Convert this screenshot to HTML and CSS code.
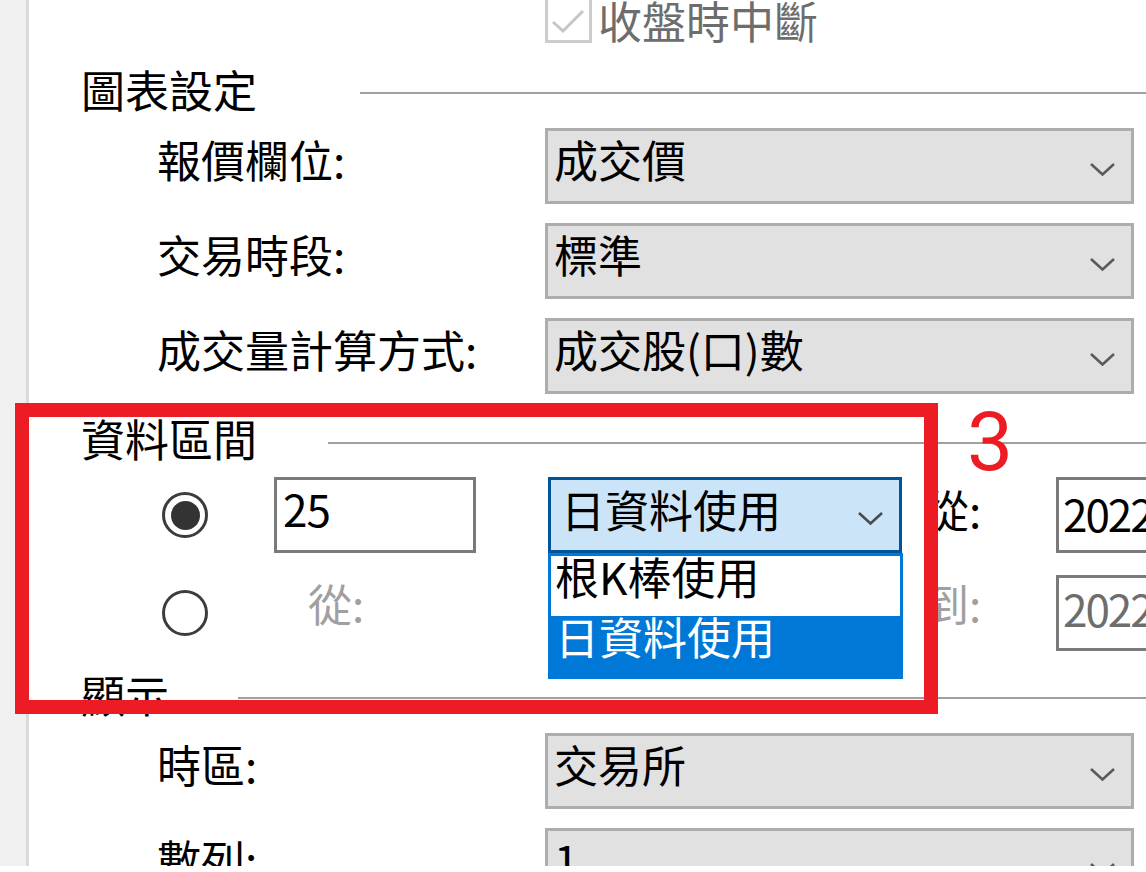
FILE: index.html
```html
<!DOCTYPE html>
<html lang="zh-Hant">
<head>
<meta charset="utf-8">
<title>圖表設定</title>
<link rel="stylesheet" href="styles.css">
</head>
<body>
<div class="app">
  <aside class="rail"></aside>
  <main class="panel">
    <div class="top-row">
      <span class="checkbox"><svg viewBox="0 0 41 41" width="41" height="41"><polyline points="5,23 15,32 35,12" fill="none" stroke="#c6c6c6" stroke-width="3"/></svg></span>
      <span class="top-label">收盤時中斷</span>
    </div>

    <div class="section-head head-chart">
      <span class="section-title">圖表設定</span><span class="section-rule"></span>
    </div>
    <div class="field-row first">
      <span class="field-label">報價欄位:</span>
      <div class="combo"><span class="combo-text">成交價</span><svg class="chev" viewBox="0 0 27 15"><polyline points="2,2 13.5,12.5 25,2" fill="none" stroke="#5a5a5a" stroke-width="2.6"/></svg></div>
    </div>
    <div class="field-row">
      <span class="field-label">交易時段:</span>
      <div class="combo"><span class="combo-text">標準</span><svg class="chev" viewBox="0 0 27 15"><polyline points="2,2 13.5,12.5 25,2" fill="none" stroke="#5a5a5a" stroke-width="2.6"/></svg></div>
    </div>
    <div class="field-row">
      <span class="field-label">成交量計算方式:</span>
      <div class="combo"><span class="combo-text">成交股(口)數</span><svg class="chev" viewBox="0 0 27 15"><polyline points="2,2 13.5,12.5 25,2" fill="none" stroke="#5a5a5a" stroke-width="2.6"/></svg></div>
    </div>

    <div class="section-head head-range">
      <span class="section-title">資料區間</span><span class="section-rule"></span>
    </div>
    <div class="range-grid">
      <span class="radio on"></span>
      <span class="textbox">25</span>
      <div class="combo-open">
        <span class="combo-text">日資料使用</span><svg class="chev" viewBox="0 0 27 15"><polyline points="2,2 13.5,12.5 25,2" fill="none" stroke="#4a4a4a" stroke-width="2.6"/></svg>
        <div class="dropdown">
          <div class="dropdown-item">根K棒使用</div>
          <div class="dropdown-item selected">日資料使用</div>
        </div>
      </div>
      <span class="range-label">從:</span>
      <span class="datebox">2022</span>

      <span class="radio"></span>
      <span class="range-label disabled from-off">從:</span>
      <span class="empty-cell"></span>
      <span class="range-label disabled">到:</span>
      <span class="datebox disabled">2022</span>
    </div>

    <div class="section-head head-display">
      <span class="section-title">顯示</span><span class="section-rule"></span>
    </div>
    <div class="field-row first">
      <span class="field-label">時區:</span>
      <div class="combo"><span class="combo-text">交易所</span><svg class="chev" viewBox="0 0 27 15"><polyline points="2,2 13.5,12.5 25,2" fill="none" stroke="#5a5a5a" stroke-width="2.6"/></svg></div>
    </div>
    <div class="field-row">
      <span class="field-label">數列:</span>
      <div class="combo"><span class="combo-text">1</span><svg class="chev" viewBox="0 0 27 15"><polyline points="2,2 13.5,12.5 25,2" fill="none" stroke="#5a5a5a" stroke-width="2.6"/></svg></div>
    </div>
  </main>

  <div class="annot-box"></div>
  <div class="annot-num">3</div>
</div>
</body>
</html>
```

FILE: styles.css
```css
html, body {
  margin: 0;
  padding: 0;
}

body {
  width: 1146px;
  height: 872px;
  overflow: hidden;
  background: #ffffff;
  font-family: "Noto Sans CJK TC", "Noto Sans CJK SC", sans-serif;
  font-size: 44px;
  color: #000000;
}

.app {
  position: relative;
  display: flex;
  height: 866px;
  overflow: hidden;
}

.rail {
  flex: none;
  width: 26px;
  background: #f0f0f0;
  border-right: 3px solid #dadada;
}

.panel {
  flex: 1;
  min-width: 0;
}

/* top disabled checkbox */
.top-row {
  height: 44px;
  display: flex;
  align-items: flex-end;
  padding-left: 516px;
}

.checkbox {
  flex: none;
  box-sizing: border-box;
  width: 47px;
  height: 47px;
  margin-bottom: 1px;
  border: 3px solid #cccccc;
  background: #ffffff;
  display: flex;
}

.top-label {
  line-height: 44px;
  margin: 0 0 2px 6px;
  color: #6d6d6d;
  white-space: nowrap;
}

/* section headers */
.section-head {
  display: flex;
  align-items: flex-start;
  height: 44px;
  line-height: 44px;
  padding-left: 52px;
}

.section-title {
  white-space: nowrap;
}

.section-rule {
  flex: 1;
  height: 2px;
  margin-top: 25px;
  background: #a0a0a0;
}

.head-chart { margin-top: 23px; }
.head-chart .section-rule { margin-left: 103px; }

.head-range { margin-top: 22px; }
.head-range .section-rule { margin-left: 71px; margin-top: 26px; }

.head-display { margin-top: 21px; }
.head-display .section-rule { margin-left: 69px; }

/* label + combo rows */
.field-row {
  display: grid;
  grid-template-columns: 388px 589px;
  height: 76px;
  margin-top: 19px;
  padding-left: 128px;
}

.field-row.first {
  margin-top: 17px;
}

.field-label {
  line-height: 44px;
  padding-top: 9px;
  white-space: nowrap;
}

.combo {
  box-sizing: border-box;
  height: 76px;
  display: flex;
  align-items: flex-start;
  padding: 6px 15px 0 6px;
  border: 3px solid #adadad;
  background: #e1e1e1;
}

.combo-text {
  flex: 1;
  line-height: 44px;
  white-space: nowrap;
}

.chev {
  flex: none;
  width: 27px;
  height: 15px;
  align-self: center;
}

/* data range block */
.range-grid {
  display: grid;
  grid-template-columns: 112px 274px 377px 131px 1fr;
  grid-template-rows: 76px 76px;
  row-gap: 22px;
  margin-top: 17px;
  padding-left: 133px;
}

.radio {
  align-self: center;
  box-sizing: border-box;
  width: 46px;
  height: 46px;
  border: 3px solid #3c3c3c;
  border-radius: 50%;
  display: flex;
  align-items: center;
  justify-content: center;
}

.radio.on::after {
  content: "";
  width: 29px;
  height: 29px;
  border-radius: 50%;
  background: #333333;
}

.textbox {
  box-sizing: border-box;
  width: 202px;
  height: 76px;
  padding: 6px 0 0 6px;
  border: 3px solid #7a7a7a;
  background: #ffffff;
  line-height: 44px;
  letter-spacing: -1px;
}

.combo-open {
  position: relative;
  box-sizing: border-box;
  width: 354px;
  height: 76px;
  display: flex;
  align-items: flex-start;
  padding: 7px 15px 0 10px;
  border: 3px solid #005499;
  background: #cce4f7;
}

.dropdown {
  position: absolute;
  left: -3px;
  top: 73px;
  box-sizing: border-box;
  width: 355px;
  border: 3px solid #0078d7;
  background: #ffffff;
  z-index: 3;
}

.dropdown-item {
  height: 60px;
  line-height: 40px;
  padding-left: 4px;
  white-space: nowrap;
}

.dropdown-item.selected {
  background: #0078d7;
  color: #ffffff;
}

.range-label {
  line-height: 44px;
  padding-top: 10px;
  white-space: nowrap;
}

.range-label.disabled {
  color: #a0a0a0;
  padding-top: 6px;
}

.from-off {
  margin-left: 34px;
}

.datebox {
  box-sizing: border-box;
  width: 200px;
  height: 76px;
  padding: 11px 0 0 4px;
  border: 3px solid #7a7a7a;
  background: #ffffff;
  line-height: 44px;
  letter-spacing: -2px;
}

.datebox.disabled {
  padding-top: 8px;
  color: #6d6d6d;
}

/* red annotation */
.annot-box {
  position: absolute;
  left: 15px;
  top: 403px;
  box-sizing: border-box;
  width: 923px;
  height: 311px;
  border: 14px solid #ed1c24;
  z-index: 5;
}

.annot-num {
  position: absolute;
  left: 967px;
  top: 401px;
  font-family: Roboto, "Liberation Sans", sans-serif;
  font-weight: 400;
  font-size: 82px;
  line-height: 83px;
  color: #ed1c24;
  z-index: 5;
}
```
